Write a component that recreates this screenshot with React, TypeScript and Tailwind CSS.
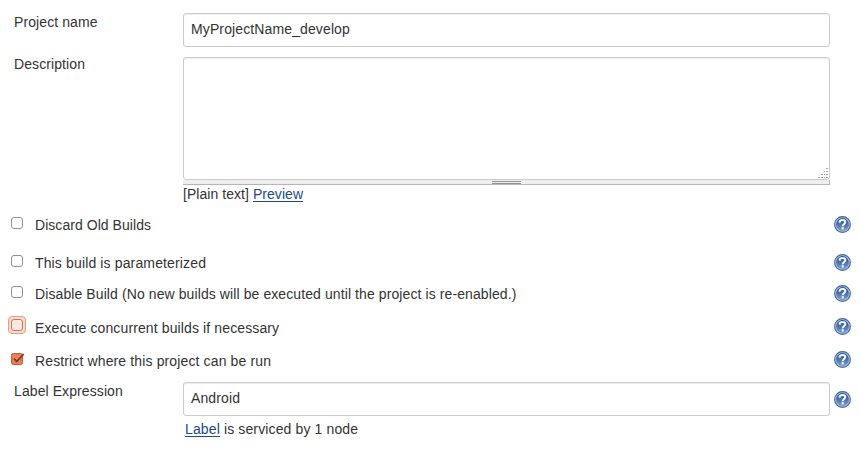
import type { ReactNode } from "react";

function HelpIcon({ className = "" }: { className?: string }) {
  return (
    <svg viewBox="0 0 17 17" className={`h-[17px] w-[17px] shrink-0 ${className}`} aria-label="Help">
      <defs>
        <linearGradient id="help" x1="0" y1="0" x2="0" y2="1">
          <stop offset="0" stopColor="#1f4a8c" />
          <stop offset="1" stopColor="#7b9dcd" />
        </linearGradient>
      </defs>
      <circle cx="8.5" cy="8.5" r="7.9" fill="#b5c8e1" stroke="#3f659d" strokeWidth="1.1" />
      <circle cx="8.5" cy="8.5" r="6.4" fill="url(#help)" />
      <path d="M5.7 6.8V6C5.7 4.5 6.8 3.9 8.5 3.9s2.8.6 2.8 2.2c0 2-2.6 1.8-2.6 4.1" fill="none" stroke="#f4f7fb" strokeWidth="2" />
      <rect x="7.6" y="11.2" width="2.2" height="2.2" fill="#f4f7fb" />
    </svg>
  );
}

type BoxState = "off" | "focus" | "on";

function Checkbox({ state }: { state: BoxState }) {
  if (state === "focus") {
    return (
      <span className="-mt-0.5 -ml-[3px] mr-2 flex h-[18px] w-[18px] shrink-0 items-center justify-center rounded-[4px] border border-[#f19b78] bg-[#fbd9cb]">
        <span className="h-3 w-3 rounded-[3px] border border-[#a48378] bg-[#fde6de]" />
      </span>
    );
  }
  if (state === "on") {
    return (
      <svg viewBox="0 0 14 12" className="mt-0.5 mr-[10px] h-3 w-[14px] shrink-0">
        <rect x=".5" y=".5" width="11" height="11" rx="1.8" fill="#ee7e55" stroke="#b85c38" />
        <path d="M3 5.5 5.7 8.6 12.8 1" fill="none" stroke="#65402f" strokeWidth="1.7" />
      </svg>
    );
  }
  return <span className="mt-0.5 mr-3 h-3 w-3 shrink-0 rounded-[3px] border border-[#92918c] bg-white" />;
}

const options: { text: string; state: BoxState; height: string; help: string; spacing: string }[] = [
  { text: "Discard Old Builds", state: "off", height: "h-[38px]", help: "mt-px", spacing: "tracking-[0.05px]" },
  { text: "This build is parameterized", state: "off", height: "h-[31px]", help: "mt-px", spacing: "tracking-[0.14px]" },
  { text: "Disable Build (No new builds will be executed until the project is re-enabled.)", state: "off", height: "h-[34px]", help: "mt-px", spacing: "tracking-[0.095px]" },
  { text: "Execute concurrent builds if necessary", state: "focus", height: "h-[33px]", help: "", spacing: "tracking-[0.12px]" },
  { text: "Restrict where this project can be run", state: "on", height: "h-[30px]", help: "", spacing: "tracking-[0.13px]" },
];

function Field({ label, height, children }: { label: string; height: string; children: ReactNode }) {
  return (
    <div className={`flex items-start ${height}`}>
      <div className="w-[169px] shrink-0 whitespace-nowrap">{label}</div>
      {children}
    </div>
  );
}

const inputStyle = "mt-px h-[34px] w-[647px] shrink-0 rounded-[3px] border border-[#cccccc] bg-white px-[7px] pb-0.5 tracking-[0.12px] shadow-[inset_0_1px_1px_rgba(0,0,0,0.075)] outline-none";
const linkStyle = "inline-block h-[18px] border-b border-[#204a87] text-[#204a87]";

export default function App() {
  return (
    <main className="h-[449px] w-[862px] overflow-hidden bg-white pt-3 font-['Liberation_Sans',sans-serif] text-[14px] leading-5 tracking-[0.09px] text-[#333333]">
      <div className="pl-[14px]">
        <Field label="Project name" height="h-[42px]">
          <input className={inputStyle} defaultValue="MyProjectName_develop" />
        </Field>
        <Field label="Description" height="h-[161px]">
          <div className="mt-[3px] w-[647px]">
            <div className="flex h-[123px] items-end justify-end rounded-[3px] border border-[#cccccc] shadow-[inset_0_1px_1px_rgba(0,0,0,0.075)]">
              <svg viewBox="0 0 11 11" className="h-[11px] w-[11px]" fill="#a5a5a5">
                <path d="M8 0h2v1H8zM6 3h1v1H6zM8 3h2v1H8zM3 6h2v1H3zM6 6h1v1H6zM8 6h2v1H8zM0 9h2v1H0zM3 9h2v1H3zM6 9h1v1H6zM8 9h2v1H8z" />
              </svg>
            </div>
            <div className="flex h-[5px] justify-center border-r border-b border-[#b9b6b1] bg-[#eeeeee]">
              <div className="mt-px h-[3px] w-[29px] border-y border-[#929292]" />
            </div>
            <div className="-mt-px tracking-[0.05px]">
              [Plain text] <a className={linkStyle}>Preview</a>
            </div>
          </div>
        </Field>
      </div>
      {options.map((o) => (
        <div key={o.text} className={`flex items-start pr-[11px] pl-[11px] ${o.height}`}>
          <Checkbox state={o.state} />
          <span className={`whitespace-nowrap ${o.spacing} ${o.state === "focus" ? "pl-px" : ""}`}>{o.text}</span>
          <HelpIcon className={`ml-auto ${o.help}`} />
        </div>
      ))}
      <div className="pl-[14px]">
        <Field label="Label Expression" height="h-[38px]">
          <input className={inputStyle} defaultValue="Android" />
          <HelpIcon className="mt-[10px] ml-1" />
        </Field>
        <div className="pl-[171px] tracking-[0.13px]">
          <a className={linkStyle}>Label</a> is serviced by 1 node
        </div>
      </div>
    </main>
  );
}
